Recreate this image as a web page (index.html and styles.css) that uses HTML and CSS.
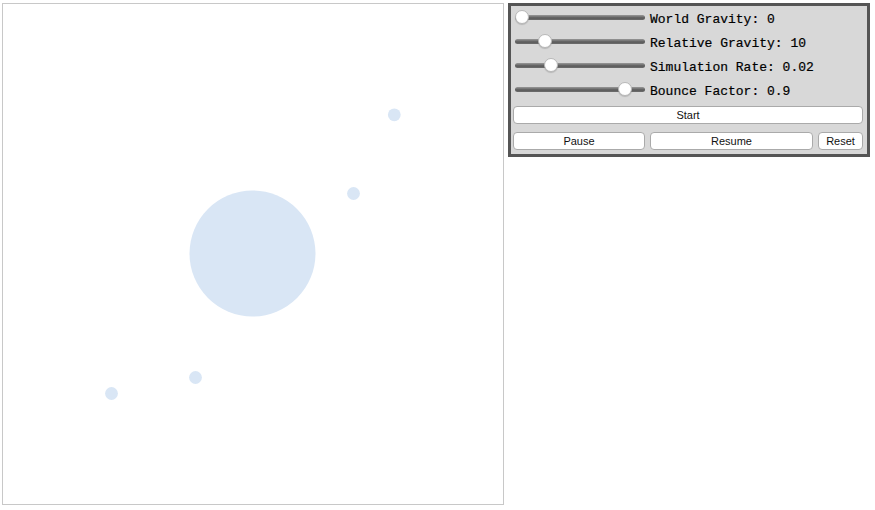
FILE: index.html
```html
<!DOCTYPE html>
<html>
<head>
<meta charset="utf-8">
<link rel="stylesheet" href="styles.css">
</head>
<body>
<div class="page">
  <div class="stage">
    <svg class="canvas" width="500" height="500" viewBox="0 0 500 500">
      <circle cx="249.5" cy="249.5" r="63" class="body"/>
      <circle cx="391.3" cy="110.8" r="6.4" class="body"/>
      <circle cx="350.5" cy="189.5" r="6.4" class="body"/>
      <circle cx="192.5" cy="373.5" r="6.4" class="body"/>
      <circle cx="108.5" cy="389.5" r="6.4" class="body"/>
    </svg>
  </div>
  <div class="panel">
    <div class="row">
      <input type="range" class="slider" min="0" max="100" value="0">
      <span class="label">World Gravity: 0</span>
    </div>
    <div class="row">
      <input type="range" class="slider" min="0" max="50" step="0.1" value="9.8">
      <span class="label">Relative Gravity: 10</span>
    </div>
    <div class="row">
      <input type="range" class="slider" min="0" max="1" step="0.001" value="0.248">
      <span class="label">Simulation Rate: 0.02</span>
    </div>
    <div class="row">
      <input type="range" class="slider" min="0" max="1" step="0.01" value="0.89">
      <span class="label">Bounce Factor: 0.9</span>
    </div>
    <button class="btn start">Start</button>
    <div class="btnrow">
      <button class="btn pause">Pause</button>
      <button class="btn resume">Resume</button>
      <button class="btn reset">Reset</button>
    </div>
  </div>
</div>
</body>
</html>
```

FILE: styles.css
```css
html, body {
  margin: 0;
  padding: 0;
  background: #fff;
}
.page {
  display: flex;
  align-items: flex-start;
  gap: 4px;
  padding: 3px 0 0 2px;
}
.stage {
  border: 1px solid #c8c8c8;
  width: 500px;
  height: 500px;
}
.canvas {
  display: block;
}
.body {
  fill: #d9e6f5;
}
.panel {
  width: 350px;
  border: 3px solid #555;
  background: #d8d8d8;
  padding: 0 4px 4px 2px;
}
.row {
  display: flex;
  align-items: center;
  gap: 5px;
  height: 24px;
}
.label {
  font-family: "Liberation Mono", "Courier New", monospace;
  font-size: 13px;
  color: #000;
  -webkit-text-stroke: 0.2px #000;
  line-height: 20px;
  padding-top: 4px;
}
.slider {
  -webkit-appearance: none;
  appearance: none;
  width: 130px;
  height: 14px;
  margin: 0 0 2px 2px;
  background: transparent;
}
.slider::-webkit-slider-runnable-track {
  height: 5px;
  border-radius: 3px;
  background: linear-gradient(#9a9a9a, #5a5a5a 60%, #6e6e6e);
}
.slider::-webkit-slider-thumb {
  -webkit-appearance: none;
  width: 14px;
  height: 14px;
  margin-top: -4.5px;
  border-radius: 50%;
  background: #fff;
  border: 1px solid #b8b8b8;
  box-sizing: border-box;
  box-shadow: 0 1px 1px rgba(0,0,0,0.15);
}
.btn {
  display: block;
  font-family: "Liberation Sans", Arial, sans-serif;
  font-size: 11px;
  color: #111;
  background: #fff;
  border: 1px solid #aaa;
  border-radius: 4px;
  height: 18px;
  padding: 0;
  line-height: 16px;
  text-align: center;
}
.start {
  width: 100%;
  margin-top: 4px;
}
.btnrow {
  display: flex;
  gap: 5px;
  margin-top: 8px;
}
.pause { width: 132px; }
.resume { width: 163px; }
.reset { width: 45px; }
```
